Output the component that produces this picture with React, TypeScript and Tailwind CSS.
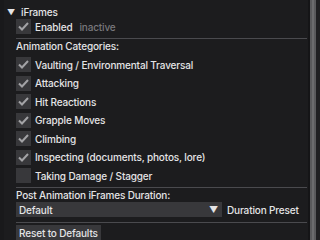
import React from "react";

const font = { fontFamily: "Inter, 'Noto Sans', sans-serif" };

const categories: { label: string; on: boolean }[] = [
  { label: "Vaulting / Environmental Traversal", on: true },
  { label: "Attacking", on: true },
  { label: "Hit Reactions", on: true },
  { label: "Grapple Moves", on: true },
  { label: "Climbing", on: true },
  { label: "Inspecting (documents, photos, lore)", on: true },
  { label: "Taking Damage / Stagger", on: false },
];

function Check({ on }: { on: boolean }) {
  return (
    <div className="w-[15px] h-[15px] shrink-0 bg-[#38383b] flex items-center justify-center">
      {on && (
        <svg width="11" height="9" viewBox="0 0 11 9" fill="none">
          <path d="M1 4.5 L4 7.5 L10 1" stroke="#a3a3a6" strokeWidth="2" />
        </svg>
      )}
    </div>
  );
}

function Row({ label, on, extra }: { label: string; on: boolean; extra?: string }) {
  return (
    <div className="h-[15px] flex items-center gap-[4px] whitespace-nowrap">
      <Check on={on} />
      <span className="text-[#e4e4e6]">{label}</span>
      {extra && <span className="ml-[3px] text-[#78787c]">{extra}</span>}
    </div>
  );
}

function Sep() {
  return <div className="h-px bg-[#4a4a4e] mr-[1px]" />;
}

export default function App() {
  return (
    <div
      className="w-[320px] h-[240px] overflow-hidden bg-[#1c1c1e] flex text-[10px] font-medium leading-none tracking-[-0.15px]"
      style={font}
    >
      <div className="w-[4px] shrink-0 bg-[#19191b]" />
      <div className="flex-1 min-w-0 pt-[4px]">
        <div className="h-[15px] flex items-center gap-[6px] pl-[3px] text-[#e4e4e6]">
          <span className="text-[8px]">▼</span>
          <span>iFrames</span>
        </div>
        <div className="pl-[12px]">
          <Row label="Enabled" on extra="inactive" />
          <div className="mt-[4px]">
            <Sep />
          </div>
          <div className="h-[14px] flex items-center text-[#e4e4e6]">Animation Categories:</div>
          <div className="mt-[4px] flex flex-col gap-[3.5px]">
            {categories.map((c) => (
              <Row key={c.label} label={c.label} on={c.on} />
            ))}
          </div>
          <div className="mt-[4px]">
            <Sep />
          </div>
          <div className="h-[14px] flex items-center text-[#e4e4e6]">Post Animation iFrames Duration:</div>
          <div className="flex items-center h-[15px] whitespace-nowrap">
            <div className="w-[206px] shrink-0 h-[15px] bg-[#38383b] flex items-center pl-[3px] pr-[4px] text-[#e4e4e6]">
              <span className="flex-1">Default</span>
              <span className="text-[9px]">▼</span>
            </div>
            <span className="ml-[5px] text-[#e4e4e6]">Duration Preset</span>
          </div>
          <div className="mt-[5px]">
            <Sep />
          </div>
          <div className="mt-[2px]">
            <div className="inline-flex items-center h-[16px] px-[3px] bg-[#38383b] text-[#e4e4e6]">
              Reset to Defaults
            </div>
          </div>
        </div>
      </div>
      <div className="w-[2px] shrink-0 bg-[#151517]" />
      <div className="w-[6px] shrink-0 bg-[#5a5a5c] flex justify-center">
        <div className="w-[2px] bg-[#6c6c6e]" />
      </div>
      <div className="w-[4px] shrink-0 bg-[#202022]" />
    </div>
  );
}
